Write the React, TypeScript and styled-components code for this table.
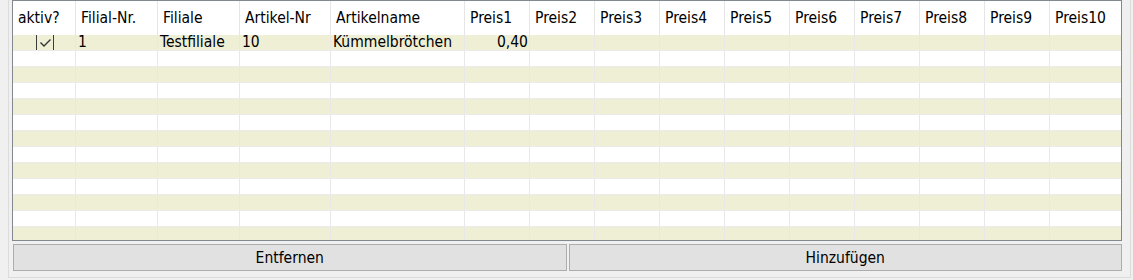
import React from "react";
import styled, { createGlobalStyle } from "styled-components";

const GlobalStyle = createGlobalStyle`
  html, body {
    margin: 0;
    padding: 0;
    background: #f0f0f0;
    overflow: hidden;
  }
  * { box-sizing: border-box; }
`;

const FONT = `"DejaVu Sans Condensed", "DejaVu Sans", "Liberation Sans", sans-serif`;
const COLS = "63px 82px 82px 91px 134px repeat(9, 65px) 1fr";

const Frame = styled.div`
  margin-left: 8px;
  width: 1123px;
  height: 278px;
  border: 1px solid #dcdcdc;
  border-top: none;
  padding: 0 8px 6px 3px;
  display: flex;
  flex-direction: column;
  gap: 3px;
  font-family: ${FONT};
  font-stretch: condensed;
  font-size: 15.5px;
  color: #000;
`;

const Table = styled.div`
  height: 241px;
  border: 1px solid #828790;
  background: #fff;
  overflow: hidden;
  display: flex;
  flex-direction: column;
`;

const HeaderRow = styled.div`
  display: grid;
  grid-template-columns: ${COLS};
  height: 34px;
  flex: none;
  background: #fff;
`;

const HeaderCell = styled.div`
  display: flex;
  align-items: center;
  padding: 0 0 0 5px;
  border-right: 1px solid #e5e5e5;
  white-space: nowrap;
  overflow: hidden;
  line-height: 18px;
  &:last-child { border-right: none; }
`;

const Row = styled.div<{ $alt: boolean }>`
  display: grid;
  grid-template-columns: ${COLS};
  height: 16px;
  flex: none;
  background: ${(p) => (p.$alt ? "#efefd6" : "#ffffff")};
  border-bottom: 1px solid #ebebeb;
`;

const Cell = styled.div<{ $right?: boolean; $center?: boolean }>`
  display: flex;
  align-items: center;
  justify-content: ${(p) => (p.$right ? "flex-end" : p.$center ? "center" : "flex-start")};
  padding: 0 ${(p) => (p.$right ? "1px" : "0")} 0 ${(p) => (p.$center ? "0" : "2px")};
  border-right: 1px solid #e8e8e8;
  white-space: nowrap;
  overflow: visible;
  line-height: 15px;
  &:last-child { border-right: none; }
`;

const CheckBox = styled.span`
  display: inline-flex;
  align-items: center;
  justify-content: center;
  width: 18px;
  height: 15px;
  border-left: 1px solid #3c3c3c;
  border-right: 1px solid #3c3c3c;
  margin-left: 1px;
`;

const ButtonRow = styled.div`
  display: grid;
  grid-template-columns: 1fr 1fr;
  gap: 2px;
  padding-left: 1px;
`;

const Button = styled.button`
  height: 27px;
  background: #e1e1e1;
  border: 1px solid #adadad;
  font-family: ${FONT};
  font-stretch: condensed;
  font-size: 15.5px;
  color: #000;
  padding: 0;
  margin: 0;
  line-height: 18px;
`;

const headers = [
  "aktiv?",
  "Filial-Nr.",
  "Filiale",
  "Artikel-Nr",
  "Artikelname",
  "Preis1",
  "Preis2",
  "Preis3",
  "Preis4",
  "Preis5",
  "Preis6",
  "Preis7",
  "Preis8",
  "Preis9",
  "Preis10",
];

const Check = () => (
  <CheckBox>
    <svg width="14" height="12" viewBox="0 0 14 12">
      <polyline points="2.5,5.5 6,9 12.5,2.5" fill="none" stroke="#333" strokeWidth="1.4" />
    </svg>
  </CheckBox>
);

export default function App() {
  const rows = Array.from({ length: 13 }, (_, i) => i);
  return (
    <>
      <GlobalStyle />
      <Frame>
        <Table>
          <HeaderRow>
            {headers.map((h) => (
              <HeaderCell key={h}>{h}</HeaderCell>
            ))}
          </HeaderRow>
          {rows.map((i) => (
            <Row key={i} $alt={i % 2 === 0}>
              {i === 0 ? (
                <>
                  <Cell $center>
                    <Check />
                  </Cell>
                  <Cell>1</Cell>
                  <Cell>Testfiliale</Cell>
                  <Cell>10</Cell>
                  <Cell>Kümmelbrötchen</Cell>
                  <Cell $right>0,40</Cell>
                  {Array.from({ length: 9 }, (_, k) => (
                    <Cell key={k} />
                  ))}
                </>
              ) : (
                headers.map((h) => <Cell key={h} />)
              )}
            </Row>
          ))}
        </Table>
        <ButtonRow>
          <Button>Entfernen</Button>
          <Button>Hinzufügen</Button>
        </ButtonRow>
      </Frame>
    </>
  );
}
